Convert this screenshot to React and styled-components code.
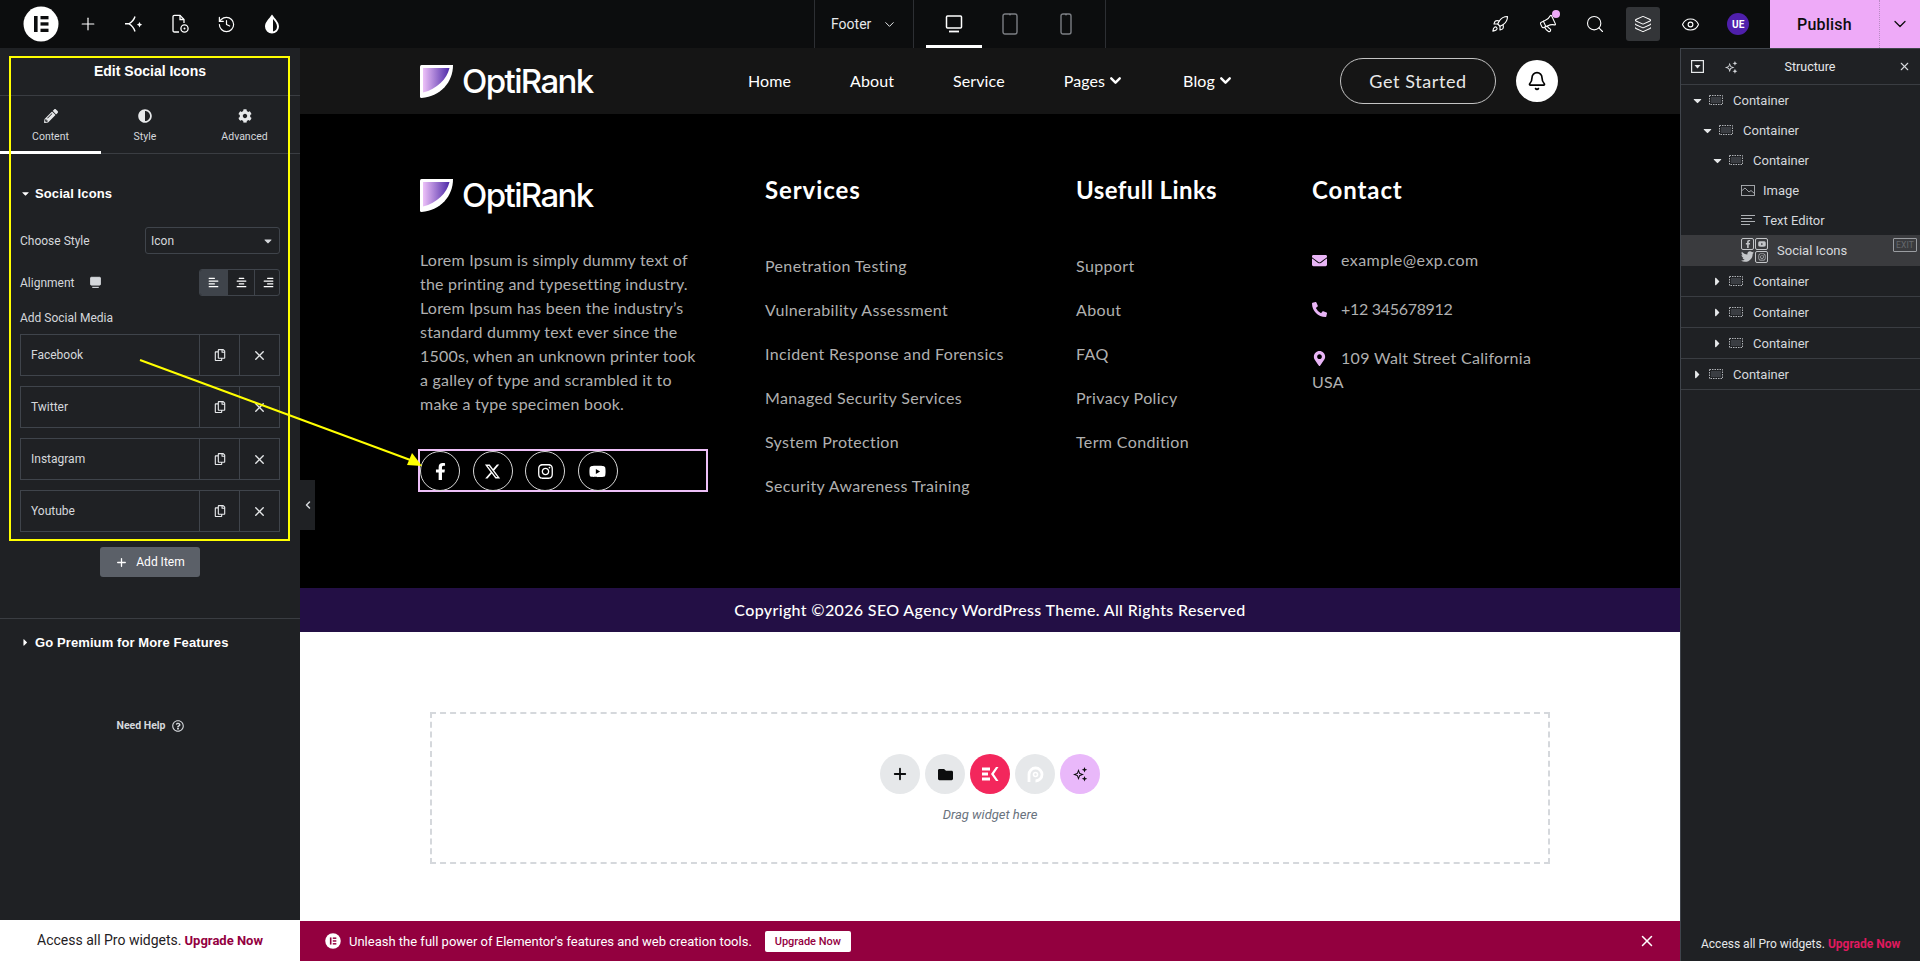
import React from 'react';
import styled, { createGlobalStyle } from 'styled-components';
import { Plus, History, Rocket, Megaphone, Search, Layers, Eye, ChevronDown, ChevronLeft, Bell, X } from 'lucide-react';
import { FaFacebookF, FaInstagram, FaYoutube, FaEnvelope, FaPhoneAlt, FaMapMarkerAlt, FaPencilAlt, FaAdjust, FaCog, FaRegCopy, FaCaretDown, FaCaretRight, FaAlignLeft, FaAlignCenter, FaAlignRight, FaFolder, FaTwitter, FaRegQuestionCircle } from 'react-icons/fa';
import { FaXTwitter } from 'react-icons/fa6';

const Global = createGlobalStyle`
  html, body { margin: 0; padding: 0; background: #000; }
  * { box-sizing: border-box; }
  body { font-family: Roboto, "Liberation Sans", sans-serif; }
`;

const Page = styled.div`
  position: relative; width: 1920px; height: 961px; overflow: hidden;
  display: flex; flex-direction: column; background: #fff;
`;

/* ---------- top bar ---------- */
const TopBar = styled.header`
  height: 48px; flex: none; display: flex; background: #0c0d0e; color: #fff;
`;
const LeftTools = styled.div`
  width: 814px; display: flex; align-items: center; padding-left: 23px;
`;
const LogoCircle = styled.div`
  width: 36px; height: 36px; margin-right: 6px; display: flex;
`;
const ToolIcon = styled.div`
  width: 46px; height: 48px; display: flex; align-items: center; justify-content: center; color: #fff;
`;
const DocSelect = styled.div`
  width: 100px; border-left: 1px solid #2d2f33; border-right: 1px solid #2d2f33;
  display: flex; align-items: center; gap: 11px; padding-left: 16px;
  font-size: 14px; color: #e6e8ea;
`;
const Devices = styled.div`
  width: 192px; display: flex; padding-left: 12px; border-right: 1px solid #2d2f33;
`;
const DeviceBtn = styled.div`
  width: 56px; height: 48px; display: flex; align-items: center; justify-content: center;
  color: ${p => (p.$active ? '#fff' : '#7c7f84')};
  border-bottom: 3px solid ${p => (p.$active ? '#fff' : 'transparent')};
  padding-top: 3px;
`;
const RightTools = styled.div`
  flex: 1; display: flex; justify-content: flex-end; align-items: center; padding-right: 8px;
`;
const RightIcon = styled.div`
  position: relative; width: 47.6px; height: 48px; display: flex; align-items: center; justify-content: center;
`;
const ActiveBox = styled.div`
  width: 34px; height: 34px; border-radius: 3px; background: #333538;
  display: flex; align-items: center; justify-content: center;
`;
const NoticeDot = styled.span`
  position: absolute; top: 10px; left: 28px; width: 8px; height: 8px; border-radius: 50%; background: #eeaaf8;
`;
const Avatar = styled.div`
  width: 22px; height: 22px; border-radius: 50%; background: #4f1fab; color: #fff;
  font-size: 10px; font-weight: 700; display: flex; align-items: center; justify-content: center;
`;
const Publish = styled.div`
  width: 150px; display: flex; background: #eeaaf8; color: #0c0d0e;
`;
const PublishLabel = styled.div`
  width: 109px; display: flex; align-items: center; justify-content: center;
  font-size: 16px; font-weight: 500; letter-spacing: .2px;
`;
const PublishArrow = styled.div`
  flex: 1; display: flex; align-items: center; justify-content: center;
  border-left: 1px dotted #b98ac4;
`;

/* ---------- main ---------- */
const Main = styled.main`
  flex: 1; display: flex; min-height: 0;
`;
const Editor = styled.aside`
  width: 300px; flex: none; display: flex; flex-direction: column; background: #fff;
`;
const EditorBody = styled.div`
  flex: 1; background: #1f2124; color: #d5d8dc;
`;
const PanelTitle = styled.div`
  height: 48px; border-bottom: 1px solid #3a3d42; display: flex; align-items: center; justify-content: center;
  font-family: "Liberation Sans", sans-serif; font-size: 14px; font-weight: 700; color: #fff; padding-bottom: 1px;
`;
const Tabs = styled.div`
  display: grid; grid-template-columns: 101px 88px 111px; height: 58px; border-bottom: 1px solid #3a3d42;
`;
const Tab = styled.div`
  display: flex; flex-direction: column; align-items: center; gap: 7px; padding-top: 13px;
  font-size: 10.5px; color: #d5d8dc; height: 58px;
  border-bottom: 3px solid ${p => (p.$active ? '#fff' : 'transparent')};
  svg { font-size: 14px; color: #e6e8ea; }
`;
const Controls = styled.div`
  padding: 31px 20px 0;
`;
const SectionHead = styled.div`
  display: flex; align-items: center; gap: 4px; height: 16px;
  font-family: "Liberation Sans", sans-serif; font-size: 13px; font-weight: 700; color: #fff; letter-spacing: .1px;
  svg { font-size: 11px; }
`;
const ControlRow = styled.div`
  display: flex; align-items: center; justify-content: space-between; height: 27px;
  margin-top: ${p => p.$top}px; font-size: 12px;
`;
const LabelGroup = styled.div`
  display: flex; align-items: center; gap: 15px;
`;
const SelectBox = styled.div`
  width: 135px; height: 27px; border: 1px solid #3f444b; border-radius: 3px;
  display: flex; align-items: center; justify-content: space-between; padding: 0 5px; font-size: 12px;
`;
const Segments = styled.div`
  width: 81px; height: 27px; display: grid; grid-template-columns: 27px 27px 27px;
  border: 1px solid #3f444b; border-radius: 3px; overflow: hidden;
`;
const Segment = styled.div`
  display: flex; align-items: center; justify-content: center; font-size: 11px; color: #fff;
  background: ${p => (p.$active ? '#3f444b' : 'transparent')};
  border-left: ${p => (p.$active ? 'none' : '1px solid #3f444b')};
`;
const RepeaterLabel = styled.div`
  margin-top: 15px; height: 14px; line-height: 14px; font-size: 12px;
`;
const Repeater = styled.div`
  margin-top: 9px; display: flex; flex-direction: column; gap: 10px;
`;
const RepeaterRow = styled.div`
  height: 42px; display: grid; grid-template-columns: 1fr 40px 40px; border: 1px solid #3f444b;
`;
const RepeaterTitle = styled.div`
  display: flex; align-items: center; padding-left: 10px; font-size: 12px;
`;
const RepeaterBtn = styled.div`
  display: flex; align-items: center; justify-content: center; border-left: 1px solid #3f444b; font-size: 12px; color: #e6e8ea;
`;
const AddItem = styled.div`
  width: 100px; height: 30px; margin: 15px auto 0; border-radius: 3px; background: #5b6068; color: #fff;
  display: flex; align-items: center; justify-content: center; gap: 8px; font-size: 12px;
`;
const PremiumSection = styled.div`
  margin-top: 41px; border-top: 1px solid #3a3d42; height: 96px; padding: 15px 20px 0;
  display: flex; align-items: flex-start;
`;
const HelpRow = styled.div`
  display: flex; align-items: center; justify-content: center; gap: 6px; font-size: 10.5px; font-weight: 700; color: #d5d8dc;
  margin-top: 5px; svg { font-size: 12px; }
`;
const EditorPromo = styled.div`
  height: 41px; flex: none; padding: 0 0 1px 37px; display: flex; align-items: center; font-size: 14px; color: #1f2124; gap: 3px;
`;
const UpgradeLink = styled.span`
  color: ${p => p.$color}; font-weight: 700; font-size: ${p => p.$size}px;
`;

/* ---------- canvas ---------- */
const Canvas = styled.section`
  position: relative; width: 1380px; flex: none; display: flex; flex-direction: column; background: #fff;
  font-family: Lato, "Open Sans", sans-serif;
`;
const CollapseTab = styled.div`
  position: absolute; left: 0; top: 432px; width: 15px; height: 50px; background: #1f2124; color: #d5d8dc;
  display: flex; align-items: center; justify-content: center;
`;
const SiteHeader = styled.div`
  height: 66px; flex: none; background: #151515; display: flex; align-items: center; padding: 0 122px 0 120px; color: #fff;
`;
const Brand = styled.div`
  display: flex; align-items: center; gap: 9px; color: #fff;
  font-family: Inter, sans-serif; font-size: 33px; font-weight: 500; letter-spacing: -1.6px; line-height: 33px;
  width: ${p => p.$width || 'auto'};
`;
const Nav = styled.nav`
  display: flex; gap: 59px; flex: 1; font-size: 16px; letter-spacing: .1px; color: #fff; padding-bottom: 2px;
`;
const NavItem = styled.span`
  display: flex; align-items: center; gap: 2px;
`;
const Cta = styled.div`
  width: 156px; height: 46px; border: 1.5px solid #c4c4c4; border-radius: 23px; display: flex; align-items: center; justify-content: center;
  font-size: 18px; letter-spacing: .6px; color: #e8e8e8; padding-bottom: 1px;
`;
const BellCircle = styled.div`
  width: 42px; height: 42px; margin-left: 20px; border-radius: 50%; background: #fff; color: #000;
  display: flex; align-items: center; justify-content: center;
`;
const SiteFooter = styled.div`
  height: 474px; flex: none; background: #000; padding: 61px 0 0 120px;
  display: grid; grid-template-columns: 345px 311px 236px 242px; align-content: start;
  color: #b0b0b0; font-size: 16px;
`;
const AboutCol = styled.div`
  padding-top: 4px;
`;
const Para = styled.p`
  margin: 36px 0 33px; width: 290px; line-height: 24px; font-weight: 400; white-space: nowrap; letter-spacing: .22px;
`;
const SocialFrame = styled.div`
  width: 290px; height: 43px; margin-left: -2px; border: 2px solid #eec0f8; display: flex; gap: 12.5px;
`;
const SocialCircle = styled.div`
  width: 40px; height: 40px; border: 1px solid #d8d8d8; border-radius: 50%; color: #fff;
  display: flex; align-items: center; justify-content: center; font-size: 17px;
`;
const ColTitle = styled.h3`
  margin: 0; height: 30px; line-height: 30px; font-size: 24px; font-weight: 700; color: #fff; letter-spacing: ${p => p.$spacing}px;
`;
const LinkList = styled.div`
  margin-top: 49px; display: flex; flex-direction: column; gap: 20px; line-height: 24px; white-space: nowrap; letter-spacing: .36px;
`;
const ContactList = styled.div`
  margin-top: 43px; display: flex; flex-direction: column; gap: 25px; line-height: 24px;
  svg { color: #e9b5f6; font-size: 15px; margin-right: 14px; vertical-align: -2px; }
`;
const ContactItem = styled.div`
  letter-spacing: ${p => p.$spacing}px;
`;
const Copyright = styled.div`
  height: 44px; flex: none; background: #230f45; color: #fff; display: flex; align-items: center; justify-content: center;
  font-size: 16px; font-weight: 500; letter-spacing: .35px; padding-bottom: 2px;
`;
const EmptyArea = styled.div`
  flex: 1; background: #fff; padding: 80px 130px 57px;
`;
const DropZone = styled.div`
  height: 152px; border: 2px dashed #d5d8dc; padding-top: 40px;
  display: flex; flex-direction: column; align-items: center; gap: 13px;
`;
const RoundRow = styled.div`
  display: flex; gap: 5px;
`;
const RoundBtn = styled.div`
  width: 40px; height: 40px; border-radius: 50%; background: ${p => p.$bg || '#e6e8ea'}; color: ${p => p.$fg || '#0c0d0e'};
  display: flex; align-items: center; justify-content: center; font-size: 15px;
`;
const DragHint = styled.div`
  font-family: Roboto, sans-serif; font-style: italic; font-size: 13px; line-height: 16px; color: #69727d;
`;
const Banner = styled.div`
  height: 40px; flex: none; background: #93003f; color: #fff; display: flex; align-items: center; padding-left: 25px;
  font-family: Roboto, sans-serif; font-size: 13px;
`;
const BannerDot = styled.div`
  width: 16px; height: 16px; margin-right: 8px; display: flex;
`;
const BannerBtn = styled.div`
  width: 86px; height: 21px; margin-left: 13px; border-radius: 2px; background: #fff; color: #93003f; font-size: 11px; font-weight: 500;
  display: flex; align-items: center; justify-content: center;
`;
const BannerClose = styled.div`
  margin-left: auto; margin-right: 24px; display: flex;
`;

/* ---------- structure panel ---------- */
const Structure = styled.aside`
  flex: 1; background: #1f2124; border-left: 1px solid #3f444b; border-top: 1px solid #3f444b;
  display: flex; flex-direction: column; color: #d5d8dc;
`;
const StructureHead = styled.div`
  height: 36px; border-bottom: 1px solid #3a3d42; display: grid; grid-template-columns: 68px 1fr 22px;
  align-items: center; padding-left: 10px; font-size: 12.5px;
`;
const HeadIcons = styled.div`
  display: flex; gap: 20px; align-items: center;
`;
const HeadTitle = styled.div`
  text-align: center; color: #e6e8ea; padding-right: 37px;
`;
const TreeRow = styled.div`
  height: ${p => (p.$tall ? 31 : 30)}px; display: flex; align-items: center; padding-left: ${p => p.$indent}px;
  font-size: 13px; color: #d5d8dc;
  background: ${p => (p.$selected ? '#3a3b3e' : 'transparent')};
  border-bottom: ${p => (p.$border ? '1px solid #3a3d42' : 'none')};
  position: relative;
`;
const Caret = styled.span`
  width: 23px; font-size: 13px; display: flex; justify-content: center; color: #e6e8ea; margin-left: -3px;
`;
const TreeIcon = styled.span`
  width: 14px; margin-right: ${p => p.$gap || 8}px; display: flex; color: #aeb1b5;
`;
const SocialGrid = styled.span`
  width: 28px; margin-right: 8px; display: grid; grid-template-columns: 14px 14px; grid-auto-rows: 13px; color: #c4c6c9;
`;
const SocialTile = styled.span`
  width: 13px; height: 12px; border: ${p => (p.$plain ? 'none' : '1px solid #c4c6c9')}; border-radius: 2px;
  display: flex; align-items: center; justify-content: center; font-size: ${p => (p.$plain ? 13 : 8)}px;
`;
const ExitChip = styled.span`
  position: absolute; right: 3px; top: 3px; width: 24px; height: 14px; border: 1px solid #9a9da1; border-radius: 1px;
  font-size: 8.5px; line-height: 12px; text-align: center; color: #66696d; letter-spacing: .2px;
`;
const StructurePromo = styled.div`
  margin-top: auto; height: 35px; padding: 0 0 10px 20px; display: flex; align-items: flex-end; font-size: 12px; gap: 3px; color: #e6e8ea; white-space: nowrap;
`;

/* ---------- overlays ---------- */
const YellowFrame = styled.div`
  position: absolute; left: 9px; top: 56px; width: 281px; height: 485px; border: 2px solid #ffff00; pointer-events: none;
`;
const ArrowLayer = styled.svg`
  position: absolute; left: 130px; top: 350px; pointer-events: none;
`;

/* ---------- drawings ---------- */
const ElementorMark = ({ size = 36, bg = '#fff', fg = '#0c0d0e' }) => (
  <svg width={size} height={size} viewBox="0 0 36 36">
    <circle cx="18" cy="18" r="17.5" fill={bg} />
    <rect x="11" y="10" width="3.6" height="16" fill={fg} />
    <rect x="17.5" y="10" width="8" height="3.3" fill={fg} />
    <rect x="17.5" y="16.3" width="8" height="3.3" fill={fg} />
    <rect x="17.5" y="22.7" width="8" height="3.3" fill={fg} />
  </svg>
);
const ConnectIcon = () => (
  <svg width="20" height="20" viewBox="0 0 20 20" fill="none" stroke="#fff" strokeWidth="1.4">
    <path d="M11 2.5 C10 6 8 8 5 9.8 H1 M5 9.8 C8 11.5 10 14 11 17.5" />
    <path d="M15.5 8 l.9 1.8 1.8.9 -1.8.9 -.9 1.8 -.9-1.8 -1.8-.9 1.8-.9z" fill="#fff" stroke="none" />
  </svg>
);
const PageSettingsIcon = () => (
  <svg width="20" height="20" viewBox="0 0 20 20" fill="none" stroke="#fff" strokeWidth="1.3">
    <path d="M9 18 H4.5 Q3 18 3 16.5 V2.8 Q3 1.3 4.5 1.3 H10 L14 5.5 V9" />
    <path d="M10 1.3 V5.5 H14" />
    <circle cx="14.5" cy="14.5" r="3.6" />
    <circle cx="14.5" cy="14.5" r="1" fill="#fff" stroke="none" />
  </svg>
);
const DropIcon = () => (
  <svg width="20" height="22" viewBox="0 0 20 22">
    <path d="M10 1.5 C13 6 17 9 17 13.5 A7 7 0 0 1 3 13.5 C3 9 7 6 10 1.5Z" fill="#fff" />
    <path d="M11 6 C13 8.5 15 10.5 15 13.5 A5 5 0 0 1 11 18.5Z" fill="#0c0d0e" />
  </svg>
);
const MonitorIcon = ({ size = 20 }) => (
  <svg width={size} height={size} viewBox="0 0 20 20" fill="none" stroke="currentColor" strokeWidth="1.5">
    <rect x="2.5" y="2" width="15" height="12" rx="1" fill={size < 20 ? 'currentColor' : 'none'} />
    <path d="M5 17.5 H15" strokeWidth="1.8" />
  </svg>
);
const TabletIcon = ({ w = 14 }) => (
  <svg width={w + 2} height="22" viewBox={`0 0 ${w + 2} 22`} fill="none" stroke="currentColor" strokeWidth="1.4">
    <rect x="1" y="1" width={w} height="20" rx="2" />
    <path d={`M${w / 2} 1.6 H${w / 2 + 2}`} />
  </svg>
);
const Shield = ({ id }) => (
  <svg width="33" height="33" viewBox="0 0 33 33">
    <defs>
      <linearGradient id={id} x1="0" x2="1" y1="0" y2="0">
        <stop offset="0" stopColor="#edc1f8" />
        <stop offset="1" stopColor="#4d2aa8" />
      </linearGradient>
    </defs>
    <path d="M0 1.5 Q0 0 1.5 0 H33 C33 17 21 31 1.5 33 Q0 33 0 31.5Z" fill="#fff" />
    <path d="M3 3 H29.5 C27 14 17 24 3 27.5Z" fill={`url(#${id})`} />
  </svg>
);
const ContainerIcon = () => (
  <svg width="14" height="10" viewBox="0 0 14 10" fill="none" stroke="currentColor">
    <rect x=".5" y=".5" width="13" height="9" strokeDasharray="1.5 1" />
    <rect x="2" y="2" width="10" height="6" fill="#3a3d42" stroke="none" />
  </svg>
);
const ImageIcon = () => (
  <svg width="14" height="11" viewBox="0 0 14 11" fill="none" stroke="currentColor" strokeWidth=".9">
    <rect x=".5" y=".5" width="13" height="10" />
    <path d="M.5 6 L4 3 L8 7 L10 5.5 L13.5 8.5" />
  </svg>
);
const TextIcon = () => (
  <svg width="14" height="10" viewBox="0 0 14 10" stroke="currentColor" strokeWidth="1">
    <path d="M0 .5H14M0 3.5H11M0 6.5H14M0 9.5H9" />
  </svg>
);
const StructureToggle = () => (
  <svg width="13" height="13" viewBox="0 0 13 13" fill="none" stroke="#e6e8ea" strokeWidth="1.2">
    <rect x=".6" y=".6" width="11.8" height="11.8" />
    <path d="M3.5 5 H9.5 L6.5 8.5Z" fill="#e6e8ea" stroke="none" />
  </svg>
);
const SparkleStars = ({ size = 16, color = 'currentColor' }) => (
  <svg width={size} height={size} viewBox="0 0 16 16" fill={color} stroke="none">
    <path fillRule="evenodd" d="M6.5 3 L8 7 L12 8.5 L8 10 L6.5 14 L5 10 L1 8.5 L5 7Z M6.5 5.8 L5.8 7.8 L3.8 8.5 L5.8 9.2 L6.5 11.2 L7.2 9.2 L9.2 8.5 L7.2 7.8Z" />
    <path d="M12.5 1 L13.3 3 L15.3 3.8 L13.3 4.6 L12.5 6.6 L11.7 4.6 L9.7 3.8 L11.7 3Z" />
    <path d="M12.5 10 L13.3 12 L15.3 12.8 L13.3 13.6 L12.5 15.6 L11.7 13.6 L9.7 12.8 L11.7 12Z" />
  </svg>
);
const EkMark = () => (
  <svg width="18" height="18" viewBox="0 0 18 18" fill="#fff">
    <rect x="1" y="2.5" width="8" height="3" />
    <rect x="1" y="7.5" width="6" height="3" />
    <rect x="1" y="12.5" width="8" height="3" />
    <path d="M15 2 L10 9 L15 16 H17.5 L12.8 9 L17.5 2Z" />
  </svg>
);
const PMark = () => (
  <svg width="20" height="20" viewBox="0 0 20 20" fill="none" stroke="#fff" strokeWidth="2.8">
    <path d="M4 18 V10.5 A6.5 6.5 0 1 1 10.5 17" />
    <circle cx="10.5" cy="10.5" r="2" strokeWidth="1.6" />
  </svg>
);

/* ---------- data ---------- */
const about = [
  'Lorem Ipsum is simply dummy text of',
  'the printing and typesetting industry.',
  'Lorem Ipsum has been the industry’s',
  'standard dummy text ever since the',
  '1500s, when an unknown printer took',
  'a galley of type and scrambled it to',
  'make a type specimen book.',
];
const services = ['Penetration Testing', 'Vulnerability Assessment', 'Incident Response and Forensics', 'Managed Security Services', 'System Protection', 'Security Awareness Training'];
const useful = ['Support', 'About', 'FAQ', 'Privacy Policy', 'Term Condition'];
const networks = ['Facebook', 'Twitter', 'Instagram', 'Youtube'];

const tree = [
  { label: 'Container', indent: 8, caret: 'down' },
  { label: 'Container', indent: 18, caret: 'down' },
  { label: 'Container', indent: 28, caret: 'down' },
  { label: 'Image', indent: 60, icon: 'image' },
  { label: 'Text Editor', indent: 60, icon: 'text' },
  { label: 'Social Icons', indent: 60, icon: 'social', selected: true },
  { label: 'Container', indent: 28, caret: 'right', border: true },
  { label: 'Container', indent: 28, caret: 'right', border: true },
  { label: 'Container', indent: 28, caret: 'right', border: true },
  { label: 'Container', indent: 8, caret: 'right', border: true },
];

function TreeItem({ item }) {
  return (
    <TreeRow $indent={item.indent} $tall={item.border || item.selected} $border={item.border} $selected={item.selected}>
      {item.caret && <Caret>{item.caret === 'down' ? <FaCaretDown /> : <FaCaretRight />}</Caret>}
      {item.caret && <TreeIcon $gap={10}><ContainerIcon /></TreeIcon>}
      {item.icon === 'image' && <TreeIcon><ImageIcon /></TreeIcon>}
      {item.icon === 'text' && <TreeIcon><TextIcon /></TreeIcon>}
      {item.icon === 'social' && (
        <SocialGrid>
          <SocialTile><FaFacebookF /></SocialTile>
          <SocialTile><FaYoutube /></SocialTile>
          <SocialTile $plain><FaTwitter /></SocialTile>
          <SocialTile><FaInstagram /></SocialTile>
        </SocialGrid>
      )}
      {item.label}
      {item.selected && <ExitChip>EXIT</ExitChip>}
    </TreeRow>
  );
}

export default function App() {
  return (
    <Page>
      <Global />
      <TopBar>
        <LeftTools>
          <LogoCircle><ElementorMark /></LogoCircle>
          <ToolIcon><Plus size={20} strokeWidth={1.4} /></ToolIcon>
          <ToolIcon><ConnectIcon /></ToolIcon>
          <ToolIcon><PageSettingsIcon /></ToolIcon>
          <ToolIcon><History size={19} strokeWidth={1.5} /></ToolIcon>
          <ToolIcon><DropIcon /></ToolIcon>
        </LeftTools>
        <DocSelect>Footer <ChevronDown size={15} strokeWidth={1.6} /></DocSelect>
        <Devices>
          <DeviceBtn $active><MonitorIcon /></DeviceBtn>
          <DeviceBtn><TabletIcon w={14} /></DeviceBtn>
          <DeviceBtn><TabletIcon w={10} /></DeviceBtn>
        </Devices>
        <RightTools>
          <RightIcon><Rocket size={18} strokeWidth={1.5} /></RightIcon>
          <RightIcon><Megaphone size={18} strokeWidth={1.5} style={{ transform: 'rotate(-25deg)' }} /><NoticeDot /></RightIcon>
          <RightIcon><Search size={20} strokeWidth={1.3} /></RightIcon>
          <RightIcon><ActiveBox><Layers size={18} strokeWidth={1.4} /></ActiveBox></RightIcon>
          <RightIcon><Eye size={19} strokeWidth={1.4} /></RightIcon>
          <RightIcon><Avatar>UE</Avatar></RightIcon>
        </RightTools>
        <Publish>
          <PublishLabel>Publish</PublishLabel>
          <PublishArrow><ChevronDown size={20} strokeWidth={1.5} /></PublishArrow>
        </Publish>
      </TopBar>

      <Main>
        <Editor>
          <EditorBody>
            <PanelTitle>Edit Social Icons</PanelTitle>
            <Tabs>
              <Tab $active><FaPencilAlt />Content</Tab>
              <Tab><FaAdjust />Style</Tab>
              <Tab><FaCog />Advanced</Tab>
            </Tabs>
            <Controls>
              <SectionHead><FaCaretDown />Social Icons</SectionHead>
              <ControlRow $top={26}>
                Choose Style
                <SelectBox>Icon <FaCaretDown /></SelectBox>
              </ControlRow>
              <ControlRow $top={15}>
                <LabelGroup>Alignment <MonitorIcon size={13} /></LabelGroup>
                <Segments>
                  <Segment $active><FaAlignLeft /></Segment>
                  <Segment><FaAlignCenter /></Segment>
                  <Segment><FaAlignRight /></Segment>
                </Segments>
              </ControlRow>
              <RepeaterLabel>Add Social Media</RepeaterLabel>
              <Repeater>
                {networks.map(n => (
                  <RepeaterRow key={n}>
                    <RepeaterTitle>{n}</RepeaterTitle>
                    <RepeaterBtn><FaRegCopy /></RepeaterBtn>
                    <RepeaterBtn><X size={15} strokeWidth={2.2} /></RepeaterBtn>
                  </RepeaterRow>
                ))}
              </Repeater>
              <AddItem><Plus size={13} strokeWidth={2.4} />Add Item</AddItem>
            </Controls>
            <PremiumSection>
              <SectionHead><FaCaretRight />Go Premium for More Features</SectionHead>
            </PremiumSection>
            <HelpRow>Need Help <FaRegQuestionCircle /></HelpRow>
          </EditorBody>
          <EditorPromo>Access all Pro widgets. <UpgradeLink $color="#93003f" $size={13}>Upgrade Now</UpgradeLink></EditorPromo>
        </Editor>

        <Canvas>
          <SiteHeader>
            <Brand $width="328px"><Shield id="shieldA" />OptiRank</Brand>
            <Nav>
              <NavItem>Home</NavItem>
              <NavItem>About</NavItem>
              <NavItem>Service</NavItem>
              <NavItem>Pages<ChevronDown size={17} strokeWidth={3.4} /></NavItem>
              <NavItem>Blog<ChevronDown size={17} strokeWidth={3.4} /></NavItem>
            </Nav>
            <Cta>Get Started</Cta>
            <BellCircle><Bell size={20} strokeWidth={2} /></BellCircle>
          </SiteHeader>

          <SiteFooter>
            <AboutCol>
              <Brand><Shield id="shieldB" />OptiRank</Brand>
              <Para>{about.map(l => <React.Fragment key={l}>{l}<br /></React.Fragment>)}</Para>
              <SocialFrame>
                <SocialCircle><FaFacebookF /></SocialCircle>
                <SocialCircle><FaXTwitter /></SocialCircle>
                <SocialCircle><FaInstagram /></SocialCircle>
                <SocialCircle><FaYoutube /></SocialCircle>
              </SocialFrame>
            </AboutCol>
            <div>
              <ColTitle $spacing={.9}>Services</ColTitle>
              <LinkList>{services.map(s => <div key={s}>{s}</div>)}</LinkList>
            </div>
            <div>
              <ColTitle $spacing={.4}>Usefull Links</ColTitle>
              <LinkList>{useful.map(s => <div key={s}>{s}</div>)}</LinkList>
            </div>
            <div>
              <ColTitle $spacing={.9}>Contact</ColTitle>
              <ContactList>
                <ContactItem $spacing={.45}><FaEnvelope />example@exp.com</ContactItem>
                <ContactItem $spacing={-.3}><FaPhoneAlt />+12 345678912</ContactItem>
                <ContactItem $spacing={.3}><FaMapMarkerAlt />109 Walt Street California USA</ContactItem>
              </ContactList>
            </div>
          </SiteFooter>

          <Copyright>Copyright ©2026 SEO Agency WordPress Theme. All Rights Reserved</Copyright>

          <EmptyArea>
            <DropZone>
              <RoundRow>
                <RoundBtn><Plus size={18} strokeWidth={2.4} /></RoundBtn>
                <RoundBtn><FaFolder /></RoundBtn>
                <RoundBtn $bg="#f3275c"><EkMark /></RoundBtn>
                <RoundBtn><PMark /></RoundBtn>
                <RoundBtn $bg="#e9b8fa"><SparkleStars /></RoundBtn>
              </RoundRow>
              <DragHint>Drag widget here</DragHint>
            </DropZone>
          </EmptyArea>

          <Banner>
            <BannerDot><ElementorMark size={16} fg="#93003f" /></BannerDot>
            Unleash the full power of Elementor's features and web creation tools.
            <BannerBtn>Upgrade Now</BannerBtn>
            <BannerClose><X size={18} strokeWidth={2} /></BannerClose>
          </Banner>
          <CollapseTab><ChevronLeft size={12} strokeWidth={3} /></CollapseTab>
        </Canvas>

        <Structure>
          <StructureHead>
            <HeadIcons><StructureToggle /><SparkleStars size={14} /></HeadIcons>
            <HeadTitle>Structure</HeadTitle>
            <X size={13} strokeWidth={2} />
          </StructureHead>
          {tree.map((t, i) => <TreeItem key={i} item={t} />)}
          <StructurePromo>Access all Pro widgets. <UpgradeLink $color="#e0195f" $size={12}>Upgrade Now</UpgradeLink></StructurePromo>
        </Structure>
      </Main>

      <YellowFrame />
      <ArrowLayer width="300" height="125" viewBox="0 0 300 125">
        <line x1="10" y1="10" x2="283" y2="111" stroke="#ffff00" strokeWidth="2" />
        <path d="M292 116 L277 115 L282 103Z" fill="#ffff00" />
      </ArrowLayer>
    </Page>
  );
}
